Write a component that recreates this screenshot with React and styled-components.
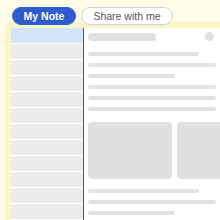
import React from "react";
import styled, { createGlobalStyle } from "styled-components";

const GlobalStyle = createGlobalStyle`
  html, body {
    margin: 0;
    padding: 0;
    background: #fefce6;
    font-family: "Liberation Sans", Arial, sans-serif;
  }
`;

const Page = styled.div`
  width: 220px;
  height: 220px;
  overflow: hidden;
  display: flex;
  flex-direction: column;
`;

const Tabs = styled.div`
  position: relative;
  z-index: 1;
  display: flex;
  gap: 5px;
  padding: 7px 0 0 12px;
`;

const Tab = styled.button`
  height: 18px;
  width: ${(p) => p.$w}px;
  padding: 0;
  border-radius: 9px;
  border: 1px solid ${(p) => (p.$active ? "#2f5ccf" : "#d2d2d2")};
  background: ${(p) => (p.$active ? "#2f5ccf" : "#ffffff")};
  color: ${(p) => (p.$active ? "#ffffff" : "#555555")};
  font-family: inherit;
  font-size: 10.5px;
  font-weight: ${(p) => (p.$active ? 700 : 400)};
  white-space: nowrap;
  display: flex;
  align-items: center;
  justify-content: center;
  box-sizing: border-box;
`;

const Panel = styled.div`
  flex: 1;
  margin: -3px 0 0 5px;
  padding: 6px 0 0 6px;
  background: #f9f5c6;
  border-top-left-radius: 8px;
  display: flex;
  min-height: 0;
  overflow: hidden;
`;

const Sidebar = styled.div`
  width: 72px;
  flex-shrink: 0;
  background: #ececec;
  border-right: 1px solid #555;
  display: flex;
  flex-direction: column;
`;

const Row = styled.div`
  height: 15px;
  flex-shrink: 0;
  border-bottom: 1px solid #ffffff;
  background: ${(p) => (p.$selected ? "#d3e5fb" : "#ececec")};
`;

const Main = styled.div`
  flex: 1;
  background: #ffffff;
  padding: 4px 4px 0 4px;
  min-width: 0;
  overflow: hidden;
  display: flex;
  flex-direction: column;
`;

const Header = styled.div`
  display: flex;
  justify-content: space-between;
  align-items: center;
  padding-right: 2px;
`;

const TitleBar = styled.div`
  width: 68px;
  height: 8px;
  border-radius: 4px;
  background: #e0e0e0;
`;

const Dot = styled.div`
  width: 9px;
  height: 9px;
  border-radius: 50%;
  background: #e0e0e0;
`;

const Lines = styled.div`
  display: flex;
  flex-direction: column;
  gap: 7px;
  margin-top: ${(p) => p.$top}px;
`;

const Line = styled.div`
  height: 4px;
  border-radius: 2px;
  background: #e2e2e2;
  width: ${(p) => p.$w}px;
`;

const Cards = styled.div`
  display: flex;
  gap: 5px;
  margin-top: 11px;
`;

const Card = styled.div`
  width: 84px;
  height: 57px;
  flex-shrink: 0;
  border-radius: 4px;
  background: #e0e0e0;
`;

export default function App() {
  const rows = Array.from({ length: 12 }, (_, i) => i);
  return (
    <>
      <GlobalStyle />
      <Page>
        <Tabs>
          <Tab $active $w={64}>My Note</Tab>
          <Tab $w={92}>Share with me</Tab>
        </Tabs>
        <Panel>
          <Sidebar>
            {rows.map((i) => (
              <Row key={i} $selected={i === 0} />
            ))}
          </Sidebar>
          <Main>
            <Header>
              <TitleBar />
              <Dot />
            </Header>
            <Lines $top={11}>
              <Line $w={111} />
              <Line $w={128} />
              <Line $w={87} />
              <Line $w={128} />
              <Line $w={128} />
              <Line $w={128} />
            </Lines>
            <Cards>
              <Card />
              <Card />
            </Cards>
            <Lines $top={10}>
              <Line $w={111} />
              <Line $w={128} />
              <Line $w={87} />
            </Lines>
          </Main>
        </Panel>
      </Page>
    </>
  );
}
